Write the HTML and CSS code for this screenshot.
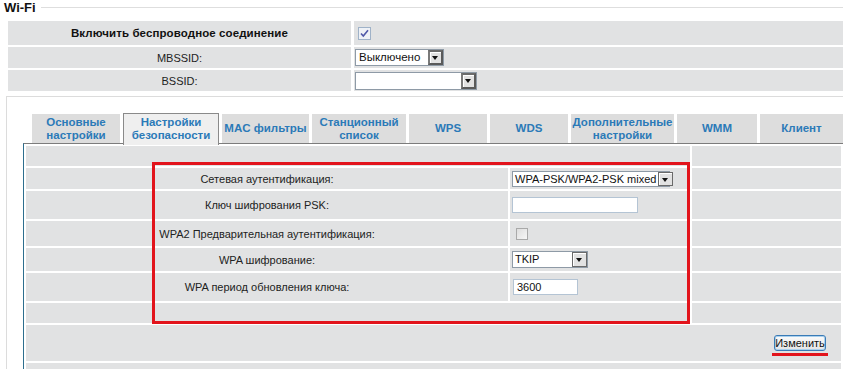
FILE: index.html
```html
<!DOCTYPE html>
<html lang="ru">
<head>
<meta charset="utf-8">
<title>Wi-Fi</title>
<link rel="stylesheet" href="styles.css">
</head>
<body>
<div class="page">
  <div class="legend"><span class="legend-title">Wi-Fi</span><span class="legend-line"></span></div>
  <div class="top-grid">
    <div class="cell label bold">Включить беспроводное соединение</div>
    <div class="cell value top-check">
      <svg class="cb" width="13" height="13" viewBox="0 0 13 13"><rect x="0.5" y="0.5" width="12" height="12" fill="#eef1f6" stroke="#9fb2c8"/><path d="M3 6.5 L5.3 9 L10 3.2" fill="none" stroke="#4f58a8" stroke-width="1.6"/></svg>
    </div>
    <div class="cell label">MBSSID:</div>
    <div class="cell value">
      <div class="select sel-mbssid"><span class="select-text big">Выключено</span><span class="select-btn"></span></div>
    </div>
    <div class="cell label">BSSID:</div>
    <div class="cell value">
      <div class="select sel-bssid"><span class="select-text big"></span><span class="select-btn"></span></div>
    </div>
  </div>

  <div class="box">
    <div class="tabs">
      <div class="tab t1">Основные<br>настройки</div>
      <div class="tab active t2">Настройки<br>безопасности</div>
      <div class="tab t3">MAC фильтры</div>
      <div class="tab t4">Станционный<br>список</div>
      <div class="tab t5">WPS</div>
      <div class="tab t6">WDS</div>
      <div class="tab t7">Дополнительные<br>настройки</div>
      <div class="tab t8">WMM</div>
      <div class="tab t9">Клиент</div>
    </div>
    <div class="panel">
      <table class="form">
        <colgroup><col class="c1"><col class="c2"><col></colgroup>
        <tr class="r0"><td colspan="2"></td><td></td></tr>
        <tr class="r1"><td class="lbl">Сетевая аутентификация:</td><td class="val"><div class="select sel-auth"><span class="select-text">WPA-PSK/WPA2-PSK mixed</span><span class="select-btn"></span></div></td><td></td></tr>
        <tr class="r2"><td class="lbl">Ключ шифрования PSK:</td><td class="val"><div class="input inp-psk"></div></td><td></td></tr>
        <tr class="r3"><td class="lbl">WPA2 Предварительная аутентификация:</td><td class="val"><svg class="cb2" width="12" height="12" viewBox="0 0 12 12"><defs><linearGradient id="g" x1="0" y1="0" x2="1" y2="1"><stop offset="0" stop-color="#dcdcdc"/><stop offset="1" stop-color="#f8f8f8"/></linearGradient></defs><rect x="0.5" y="0.5" width="11" height="11" fill="url(#g)" stroke="#a9a9a9"/></svg></td><td></td></tr>
        <tr class="r4"><td class="lbl">WPA шифрование:</td><td class="val"><div class="select sel-tkip"><span class="select-text">TKIP</span><span class="select-btn"></span></div></td><td></td></tr>
        <tr class="r5"><td class="lbl">WPA период обновления ключа:</td><td class="val"><div class="input inp-period">3600</div></td><td></td></tr>
        <tr class="r6"><td colspan="2"></td><td></td></tr>
        <tr class="r7"><td colspan="3" class="btn-cell"><button class="btn" type="button">Изменить</button></td></tr>
        <tr class="r8"><td colspan="3"></td></tr>
      </table>
    </div>
  </div>

  <div class="mark-box"></div>
  <div class="mark-line"></div>
</div>
</body>
</html>
```
FILE: styles.css
```css
html, body {
  margin: 0;
  padding: 0;
  background: #fff;
  overflow: hidden;
}
.page {
  position: relative;
  width: 843px;
  height: 369px;
  font-family: "Liberation Sans", Arial, sans-serif;
  font-size: 11px;
  color: #222;
}
.legend {
  display: flex;
  align-items: center;
  height: 15px;
  padding-left: 4px;
  gap: 5px;
}
.legend-title {
  font-weight: bold;
  font-size: 13px;
  color: #111;
  line-height: 15px;
}
.legend-line {
  flex: 1;
  border-top: 1px solid #dedede;
}
.top-grid {
  margin: 6px 0 0 8px;
  display: grid;
  grid-template-columns: 343px 1fr;
  grid-template-rows: 24px 21px 21px;
  column-gap: 3px;
  row-gap: 2px;
}
.cell {
  background: #e1e2e3;
  display: flex;
  align-items: center;
}
.label {
  justify-content: center;
}
.bold {
  font-weight: bold;
  color: #111;
  font-size: 11.5px;
  letter-spacing: 0.1px;
}
.value {
  padding-left: 1px;
}
.top-check {
  padding-left: 4px;
}
.cb {
  display: block;
}
.select {
  display: flex;
  align-items: stretch;
  box-sizing: border-box;
  background: #fff;
  border: 1px solid #8e9aa6;
}
.select-text {
  flex: 1;
  padding: 0 2px;
  line-height: 14px;
  white-space: nowrap;
  color: #111;
}
.select-text.big {
  font-size: 11.5px;
  padding-left: 3px;
}
.select-btn {
  position: relative;
  width: 15px;
  flex: none;
  box-sizing: border-box;
  background: #e2e2e2;
  border: 1px solid #6a6a6a;
  box-shadow: inset 1px 1px 0 #fff;
  margin: 0;
}
.select-btn::after {
  content: "";
  position: absolute;
  left: 3px;
  top: 5px;
  border-left: 3.5px solid transparent;
  border-right: 3.5px solid transparent;
  border-top: 4px solid #111;
}
.sel-mbssid { width: 89px; height: 17px; }
.sel-mbssid .select-btn, .sel-bssid .select-btn { border-width: 2px; border-color: #6b6b6b #5a5a5a #5a5a5a #7a7a7a; }
.sel-mbssid .select-btn::after, .sel-bssid .select-btn::after { left: 2px; top: 4px; }
.sel-bssid { width: 122px; height: 18px; }

.box {
  margin: 5px 0 0 6px;
  border-top: 1px solid #dcdcdc;
  border-left: 1px solid #dcdcdc;
  padding: 16px 0 0 16px;
}
.tabs {
  display: flex;
  align-items: flex-end;
  gap: 3px;
  margin-left: 9px;
  height: 30px;
}
.tab {
  box-sizing: border-box;
  height: 29px;
  background: #dddddd;
  color: #2b7ab8;
  font-weight: bold;
  font-size: 11.5px;
  line-height: 13px;
  text-align: center;
  display: flex;
  align-items: center;
  justify-content: center;
  white-space: nowrap;
}
.tab.active {
  position: relative;
  z-index: 1;
  height: 32px;
  margin-bottom: -2px;
  background: #efefef;
  border: 1px solid #8a8a8a;
  border-bottom: none;
  padding-bottom: 1px;
}
.t1 { width: 88px; }
.t2 { width: 96px; }
.t3 { width: 87px; }
.t4 { width: 94px; }
.t5 { width: 78px; }
.t6 { width: 78px; }
.t7 { width: 103px; }
.t8 { width: 80px; }
.t9 { flex: 1; }

.panel {
  border-top: 1px solid #7c7c7c;
  border-left: 1px solid #2d6e8e;
}
.form {
  width: 100%;
  table-layout: fixed;
  border-collapse: separate;
  border-spacing: 2px;
}
.form td {
  background: #e1e2e3;
  padding: 0;
}
.c1 { width: 482px; }
.c2 { width: 180px; }
.r0 td { height: 20px; }
.r1 td { height: 21px; }
.r2 td { height: 28px; }
.r3 td { height: 25px; }
.r4 td { height: 23px; }
.r5 td { height: 28px; }
.r6 td { height: 20px; }
.r7 td { height: 36px; }
.r8 td { height: 20px; }
.lbl {
  text-align: center;
  color: #222;
}
.val {
  padding-left: 1px !important;
  vertical-align: middle;
}
.val svg, .val .input {
  display: block;
}
.sel-auth { width: 158px; height: 16px; margin-left: 1px; }
.sel-tkip { width: 76px; height: 17px; margin-left: 1px; }
.input {
  box-sizing: border-box;
  height: 16px;
  background: #fff;
  border: 1px solid #b4c4d4;
  padding: 0 3px;
  line-height: 14px;
  color: #111;
  margin-left: 1px;
}
.inp-psk { width: 126px; }
.inp-period { width: 65px; margin-left: 2px; }
.cb2 { margin-left: 5px; }
.btn-cell {
  text-align: right;
  padding-right: 15px !important;
}
.btn {
  height: 16px;
  width: 52px;
  padding: 0;
  font-family: "Liberation Sans", Arial, sans-serif;
  font-size: 11px;
  color: #111;
  line-height: 13px;
  border: 1px solid #3a7bb6;
  border-radius: 3px;
  background: linear-gradient(#fbfbfb, #e4e4e4);
  box-shadow: inset 0 0 0 1px #a9d0ee;
  vertical-align: middle;
}
.mark-box {
  position: absolute;
  left: 152px;
  top: 162px;
  width: 532px;
  height: 156px;
  border: 3px solid #e2141c;
}
.mark-line {
  position: absolute;
  left: 772px;
  top: 353px;
  width: 56px;
  height: 3px;
  background: #e2141c;
}
```
